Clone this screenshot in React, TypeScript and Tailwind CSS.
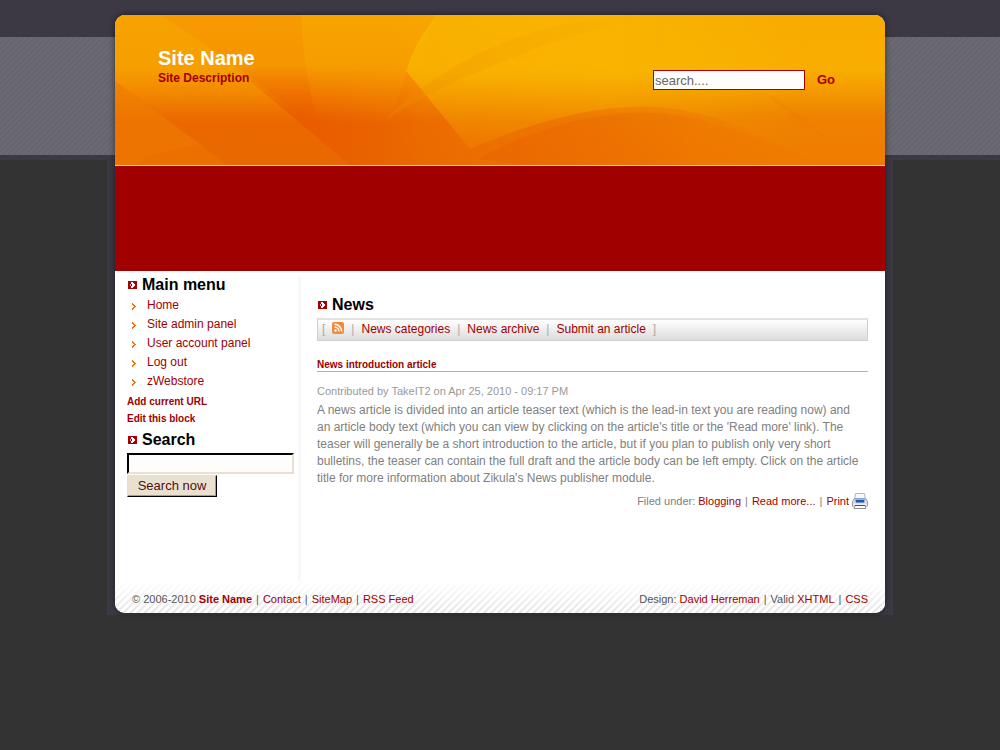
import React from 'react';

const menu = ['Home', 'Site admin panel', 'User account panel', 'Log out', 'zWebstore'];

function SquareBullet() {
  return (
    <svg width="9" height="8" viewBox="0 0 9 8" className="shrink-0" shapeRendering="crispEdges" aria-hidden="true">
      <rect width="9" height="8" fill="#a80000" />
      <path d="M3 1h2v1h1v1h1v2h-1v1h-1v1h-2v-2h1v-2h-1z" fill="#fff" />
      <path d="M2 3h1v2h-1z" fill="#e8b0b0" />
    </svg>
  );
}

function Heading({ children }: { children: React.ReactNode }) {
  return (
    <h2 className="flex h-5 items-center gap-[5px] pl-px text-base font-bold text-black">
      <SquareBullet />
      {children}
    </h2>
  );
}

function Arrow() {
  return (
    <svg width="4" height="7" viewBox="0 0 4 7" className="mt-0.5 shrink-0" shapeRendering="crispEdges" aria-hidden="true">
      <path d="M0 0h1v1h1v1h1v1h1v1h-1v1h-1v1h-1v1h-1v-2h1v-1h1v-1h-1v-1h-1z" fill="#ff6a00" />
    </svg>
  );
}

function Link({ children, className = '' }: { children: React.ReactNode; className?: string }) {
  return (
    <a href="#" className={`text-[#a00000] ${className}`}>
      {children}
    </a>
  );
}

function HeaderArt() {
  return (
    <svg className="absolute inset-0 h-full w-full" viewBox="0 0 770 150" preserveAspectRatio="none" aria-hidden="true">
      <defs>
        <linearGradient id="base" x2="0" y2="1">
          <stop offset="0" stopColor="#f8ab00" />
          <stop offset=".36" stopColor="#f8ae00" />
          <stop offset=".5" stopColor="#f49b00" />
          <stop offset=".68" stopColor="#ef8200" />
          <stop offset="1" stopColor="#ef7c00" />
        </linearGradient>
        <linearGradient id="left" x2="0" y2="1">
          <stop offset="0" stopColor="#f79a00" />
          <stop offset=".35" stopColor="#f69500" />
          <stop offset=".55" stopColor="#f07c00" />
          <stop offset=".72" stopColor="#eb6800" />
          <stop offset="1" stopColor="#ea6800" />
        </linearGradient>
        <linearGradient id="fade">
          <stop offset="0" stopColor="#fff" />
          <stop offset=".36" stopColor="#fff" />
          <stop offset=".75" stopColor="#000" />
        </linearGradient>
        <mask id="leftMask">
          <rect width="770" height="150" fill="url(#fade)" />
        </mask>
        <linearGradient id="corner" x2="0" y2="1">
          <stop offset="0" stopColor="#f6a800" stopOpacity=".6" />
          <stop offset=".4" stopColor="#f6a800" stopOpacity=".5" />
          <stop offset=".75" stopColor="#f6a000" stopOpacity="0" />
        </linearGradient>
        <linearGradient id="deep" gradientUnits="userSpaceOnUse" x1="0" y1="50" x2="0" y2="150">
          <stop offset="0" stopColor="#e94f00" stopOpacity="0" />
          <stop offset=".5" stopColor="#e94f00" stopOpacity=".5" />
          <stop offset="1" stopColor="#e94f00" stopOpacity=".5" />
        </linearGradient>
        <linearGradient id="deepFade" gradientUnits="userSpaceOnUse" x1="190" y1="0" x2="300" y2="0">
          <stop offset="0" stopColor="#fff" />
          <stop offset="1" stopColor="#000" />
        </linearGradient>
        <mask id="deepMask" maskUnits="userSpaceOnUse" x="0" y="0" width="770" height="150">
          <rect width="770" height="150" fill="url(#deepFade)" />
        </mask>
        <linearGradient id="petal" x2="0" y2="1">
          <stop offset="0" stopColor="#f8b400" stopOpacity=".4" />
          <stop offset=".5" stopColor="#f8b000" stopOpacity=".25" />
          <stop offset="1" stopColor="#f8b000" stopOpacity="0" />
        </linearGradient>
        <linearGradient id="glow" x2="0" y2="1">
          <stop offset="0" stopColor="#f8b900" stopOpacity=".7" />
          <stop offset=".4" stopColor="#f8b900" stopOpacity=".7" />
          <stop offset="1" stopColor="#f49000" stopOpacity=".15" />
        </linearGradient>
        <linearGradient id="glowFade">
          <stop offset="0" stopColor="#fff" />
          <stop offset=".65" stopColor="#fff" />
          <stop offset=".9" stopColor="#000" />
        </linearGradient>
        <mask id="glowMask" maskUnits="userSpaceOnUse" x="0" y="0" width="770" height="150">
          <rect width="770" height="150" fill="url(#glowFade)" />
        </mask>
        <linearGradient id="ribbon">
          <stop offset="0" stopColor="#ee8c00" stopOpacity=".35" />
          <stop offset="1" stopColor="#f0a000" stopOpacity="0" />
        </linearGradient>
        <linearGradient id="hill">
          <stop offset="0" stopColor="#ea6200" stopOpacity=".5" />
          <stop offset="1" stopColor="#ea6200" stopOpacity="0" />
        </linearGradient>
      </defs>
      <rect width="770" height="150" fill="url(#base)" />
      <rect width="770" height="150" fill="url(#left)" mask="url(#leftMask)" />
      <path d="M0 0H46L122 52L200 112L93 132L0 66Z" fill="url(#corner)" />
      <path d="M0 66L85 129L112 150H0Z" fill="#f08000" opacity=".5" />
      <path d="M85 129L30 142L20 150H112Z" fill="#e86000" opacity=".15" />
      <path d="M118 52L235 150H300V40Z" fill="url(#deep)" mask="url(#deepMask)" />
      <path d="M186 0C189 45 194 80 204 108L275 108L292 55L322 0Z" fill="url(#petal)" />
      <g mask="url(#glowMask)">
        <path d="M322 0C303 24 297 38 291 56L301 68L355 134C420 105 500 84 560 94C610 101 650 122 710 150H770V0Z" fill="url(#glow)" />
      </g>
      <path d="M280 95C320 60 363 34 425 15C480 2 520 0 560 0C480 12 435 26 393 45C350 61 307 81 270 105Z" fill="url(#ribbon)" />
      <path d="M362 144C420 112 500 90 560 100C610 107 650 125 710 150H405Z" fill="url(#hill)" />
      <path d="M650 78C685 97 704 115 712 124C693 114 675 99 650 78Z" fill="#ea7600" opacity=".2" />
    </svg>
  );
}

function FeedIcon() {
  return (
    <svg width="12" height="12" viewBox="0 0 12 12" aria-hidden="true">
      <rect width="12" height="12" rx="2" fill="#f08a3c" />
      <circle cx="3.500" cy="8.500" r="1.200" fill="#fff" />
      <path d="M2.500 5A4.500 4.500 0 0 1 7 9.500M2.500 2.300A7.200 7.200 0 0 1 9.700 9.500" fill="none" stroke="#fff" strokeWidth="1.400" />
    </svg>
  );
}

function PrinterIcon() {
  return (
    <svg width="16" height="16" viewBox="0 0 16 16" aria-hidden="true">
      <path d="M3.500.500h9l.8 6H2.700z" fill="#f6f8fb" stroke="#b4b8be" />
      <path d="M2.500 5.500h11l2 3v4.500h-15V8.500z" fill="#d8dade" stroke="#94979d" />
      <path d="M3 5.500h10v4h-10z" fill="#8db4f5" />
      <path d="M4 7h8v2.500H4z" fill="#2457bd" />
      <path d="M1 10.500h14v2H1z" fill="#eeeff1" />
      <path d="M3 12.500h10l1 3h-12z" fill="#fff" stroke="#8a8e95" />
      <path d="M3 12.500h10" stroke="#4a4d52" />
    </svg>
  );
}

export default function App() {
  return (
    <div className="min-h-screen bg-[linear-gradient(#3c3844,#3c3844),repeating-linear-gradient(135deg,#67656e_0px,#67656e_2px,#6e6c75_3px,#67656e_4px),linear-gradient(#3c3844,#3c3844)] bg-[#333333] bg-[length:100%_37px,100%_118px,100%_160px] bg-[position:0_0,0_37px,0_0] bg-no-repeat font-['Liberation_Sans',Arial,sans-serif] text-xs text-[#808080]">
      <div className="mx-auto max-w-[786px] bg-[linear-gradient(#3c3844,#3c3844)] bg-[position:0_155px] bg-no-repeat px-2 pt-[15px] pb-0.5">
        <div className="overflow-hidden rounded-[10px] bg-white shadow-[0_0_6px_rgba(0,0,0,0.5)]">
          <header className="relative h-[151px] border-b border-[#ffd0b0]">
            <HeaderArt />
            <div className="relative flex items-start justify-between pr-[50px] pl-[43px]">
              <div className="pt-[31px]">
                <h1 className="text-[20px] leading-6 font-bold text-white">Site Name</h1>
                <p className="text-xs leading-4 font-bold text-[#a00000]">Site Description</p>
              </div>
              <form className="flex items-center gap-3 pt-[55px]" onSubmit={(e) => e.preventDefault()}>
                <input
                  type="text"
                  aria-label="Search the site"
                  placeholder="search...."
                  className="h-5 w-[152px] border border-[#a80000] bg-[#fffdfb] px-px text-[13px] text-[#666] placeholder:text-[#666]"
                />
                <button className="text-[13px] font-bold text-[#a80000]">Go</button>
              </form>
            </div>
          </header>
          <div className="h-[105px] bg-[#a00000]" />

          <div className="flex">
            <aside className="mt-[5px] w-[186px] shrink-0 border-r-[3px] border-[#f8f8f8] pr-1 pl-3">
              <div className="-mt-px">
                <Heading>Main menu</Heading>
              </div>
              <ul className="pt-px text-xs">
                {menu.map((item) => (
                  <li key={item} className="flex h-[19px] items-center gap-[11px] pl-[5px] leading-[19px]">
                    <Arrow />
                    <Link>{item}</Link>
                  </li>
                ))}
              </ul>
              <p className="pt-0.5 text-[10px] leading-[17px] font-bold">
                <Link>Add current URL</Link>
                <br />
                <Link>Edit this block</Link>
              </p>
              <div className="pt-[3px]">
                <Heading>Search</Heading>
              </div>
              <form className="flex flex-col items-start pt-[3px]" onSubmit={(e) => e.preventDefault()}>
                <input
                  type="text"
                  aria-label="Search"
                  className="h-[21px] w-full border-2 border-t-black border-r-[#eae0d0] border-b-[#eae0d0] border-l-black bg-[#fffdfb] px-1"
                />
                <button className="mt-px h-[22px] w-[90px] border border-t-[#eae0d0] border-r-black border-b-black border-l-[#eae0d0] bg-[#eae0d0] text-[13px] text-[#501010] shadow-[inset_-1px_-1px_#b09c7c]">
                  Search now
                </button>
              </form>
            </aside>

            <main className="min-w-0 flex-1 pt-6 pr-[17px] pb-[72px] pl-4">
              <Heading>News</Heading>
              <nav className="mt-[3px] flex h-[23px] items-center gap-[7px] border border-t-2 border-[#d0d0d0] border-t-[#e2e2e2] bg-linear-to-b from-white to-[#dcdcdc] px-1 pb-0.5 text-xs text-[#aaa]">
                <span>[</span>
                <a href="#" aria-label="RSS feed" className="-mt-0.5">
                  <FeedIcon />
                </a>
                <span>|</span>
                <Link>News categories</Link>
                <span>|</span>
                <Link>News archive</Link>
                <span>|</span>
                <Link>Submit an article</Link>
                <span>]</span>
              </nav>
              <article>
                <h3 className="mt-4 border-b border-[#ffae00] pt-px text-[10px] leading-[13px] font-bold">
                  <Link>News introduction article</Link>
                </h3>
                <p className="pt-3 text-[11px] leading-[15px] text-[#999]">Contributed by TakeIT2 on Apr 25, 2010 - 09:17 PM</p>
                <p className="pt-[3px] text-xs leading-[17px]">
                  A news article is divided into an article teaser text (which is the lead-in text you are reading now) and
                  <br />
                  an article body text (which you can view by clicking on the article's title or the 'Read more' link). The
                  <br />
                  teaser will generally be a short introduction to the article, but if you plan to publish only very short
                  <br />
                  bulletins, the teaser can contain the full draft and the article body can be left empty. Click on the article
                  <br />
                  title for more information about Zikula's News publisher module.
                </p>
                <div className="flex items-center justify-end gap-[3px] pt-1.5 text-[11px] leading-4">
                  <span>Filed under:</span>
                  <Link>Blogging</Link>
                  <span className="px-px">|</span>
                  <Link>Read more...</Link>
                  <span className="px-px">|</span>
                  <Link>Print</Link>
                  <PrinterIcon />
                </div>
              </article>
            </main>
          </div>

          <footer className="flex justify-between bg-[linear-gradient(#fff,transparent),repeating-linear-gradient(135deg,#fff_0px,#fff_2px,#e4e4e4_3px,#e4e4e4_4px,#fff_5px)] px-[17px] pt-[10px] pb-1.5 text-[11px] leading-4 text-[#555]">
            <div className="flex gap-1">
              <p>
                © 2006-2010 <Link className="font-bold">Site Name</Link>
              </p>
              <span>|</span>
              <Link>Contact</Link>
              <span>|</span>
              <Link>SiteMap</Link>
              <span>|</span>
              <Link>RSS Feed</Link>
            </div>
            <div className="flex gap-1">
              <p>
                Design: <Link>David Herreman</Link>
              </p>
              <span>|</span>
              <p>
                Valid <Link>XHTML</Link>
              </p>
              <span>|</span>
              <Link>CSS</Link>
            </div>
          </footer>
        </div>
      </div>
    </div>
  );
}
